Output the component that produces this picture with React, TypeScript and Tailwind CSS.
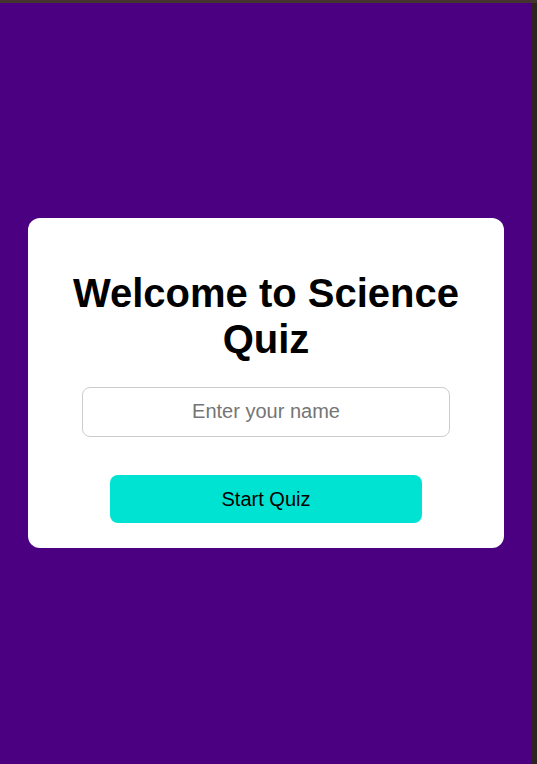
export default function App() {
  return (
    <div className="flex h-[764px] w-[537px] flex-col bg-[#2e2320] font-['Liberation_Sans',Arial,sans-serif]">
      {/* window chrome edge */}
      <div className="h-[3px] w-full bg-[#45332f]" />
      <div className="flex flex-1">
        <main className="flex flex-1 items-center justify-center bg-[#4b0082] pb-[2px]">
          <div className="flex w-[476px] flex-col items-center rounded-xl bg-white px-[25px] pb-[25px] pt-[52px]">
            <h1 className="mb-[25px] text-center text-[40px] font-bold leading-[46px] text-black">
              Welcome to Science Quiz
            </h1>
            <input
              type="text"
              placeholder="Enter your name"
              className="h-[50px] w-[368px] rounded-lg border border-[#cccccc] bg-white text-center text-[20px] text-black outline-none placeholder:text-[#757575]"
            />
            <button className="mt-[38px] h-[48px] w-[312px] rounded-lg bg-[#00e3d3] text-[20px] text-black">
              Start Quiz
            </button>
          </div>
        </main>
        <div className="w-[5px] bg-[#2e2320]" />
      </div>
    </div>
  );
}
